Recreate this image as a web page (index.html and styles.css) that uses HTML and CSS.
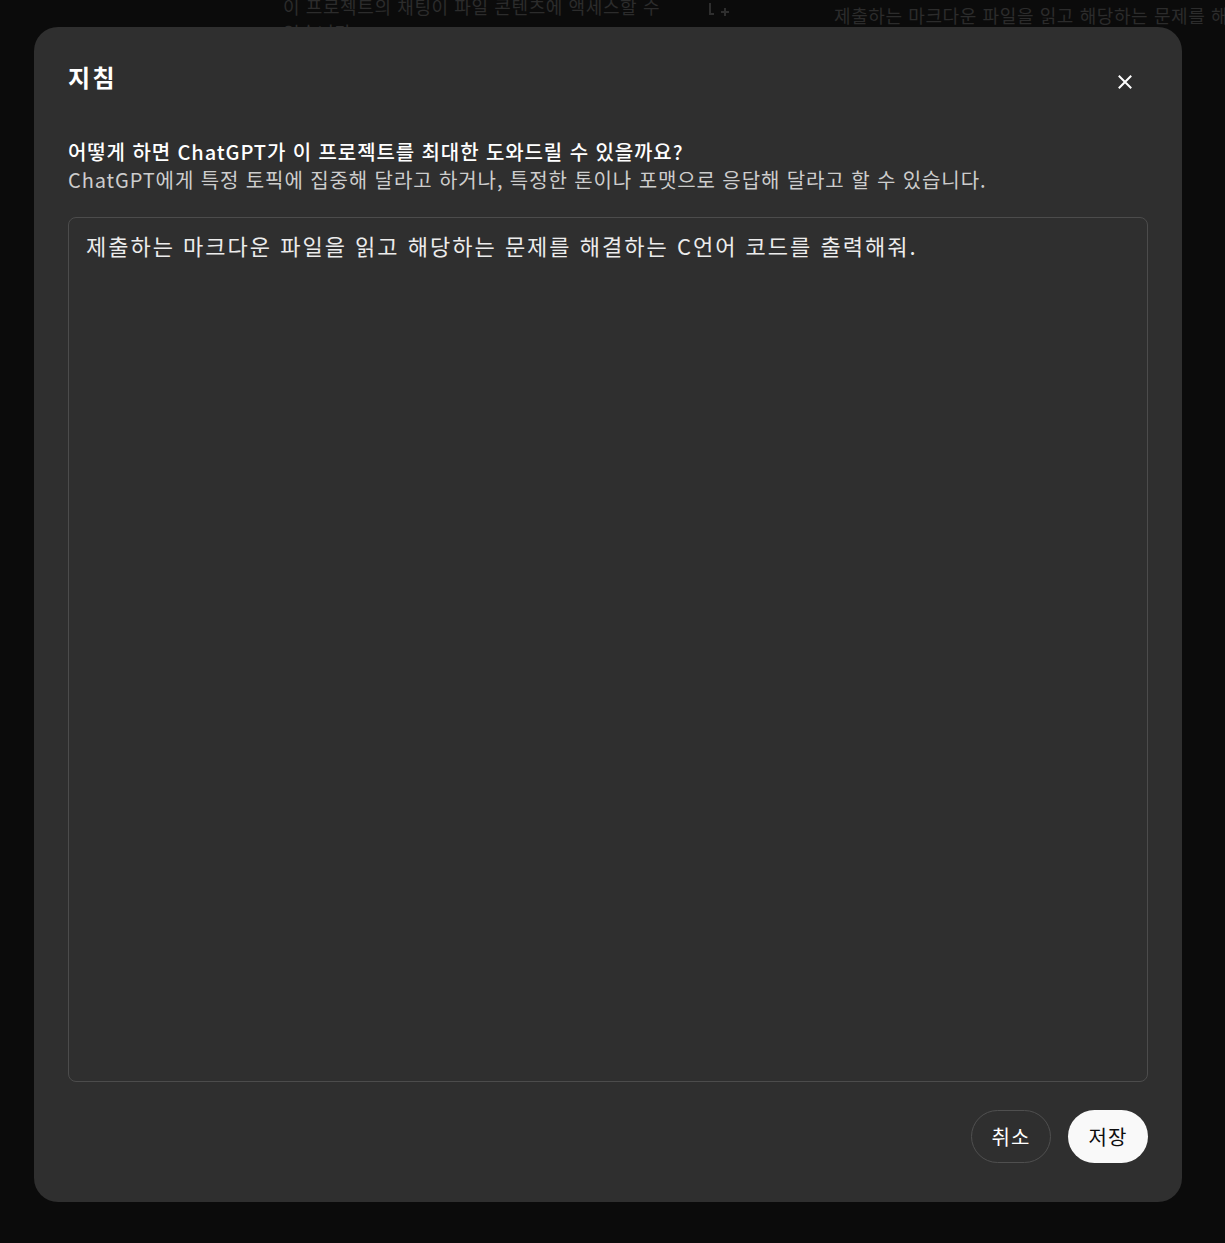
FILE: index.html
```html
<!DOCTYPE html>
<html lang="ko">
<head>
    <meta charset="utf-8">
    <title>지침</title>
    <link rel="stylesheet" href="styles.css">
</head>
<body>
    <div id="backdrop-page">
        <div class="bg-col bg-col-left">
            <p>이 프로젝트의 채팅이 파일 콘텐츠에 액세스할 수 있습니다.</p>
        </div>
        <div class="bg-col bg-col-icon">
            <svg width="26" height="16" viewBox="0 0 26 16" fill="none" stroke="#2e2e2e" stroke-width="2">
                <path d="M6 -2H2v13h4"/>
                <path d="M17 5v8M13 9h8"/>
            </svg>
        </div>
        <div class="bg-col bg-col-right">
            <p>제출하는 마크다운 파일을 읽고 해당하는 문제를 해결하는 C언어 코드를 출력해줘.</p>
        </div>
    </div>

    <div id="overlay">
        <div id="modal">
            <div class="modal-header">
                <h2 class="modal-title">지침</h2>
                <button class="close-btn" aria-label="닫기">
                    <svg width="16" height="16" viewBox="0 0 16 16" fill="none" stroke="#fff" stroke-width="2" stroke-linecap="square">
                        <path d="M2.5 2.5l11 11M13.5 2.5l-11 11"/>
                    </svg>
                </button>
            </div>
            <div class="modal-desc">
                <p class="desc-main">어떻게 하면 ChatGPT가 이 프로젝트를 최대한 도와드릴 수 있을까요?</p>
                <p class="desc-sub">ChatGPT에게 특정 토픽에 집중해 달라고 하거나, 특정한 톤이나 포맷으로 응답해 달라고 할 수 있습니다.</p>
            </div>
            <textarea class="instructions">제출하는 마크다운 파일을 읽고 해당하는 문제를 해결하는 C언어 코드를 출력해줘.</textarea>
            <div class="modal-footer">
                <button class="btn btn-cancel">취소</button>
                <button class="btn btn-save">저장</button>
            </div>
        </div>
    </div>
</body>
</html>
```

FILE: styles.css
```css
body {
    margin: 0;
    padding: 0;
    background-color: #0b0b0b;
    color: #ececec;
    font-family: "Noto Sans CJK KR", "Noto Sans", sans-serif;
    height: 100vh;
    overflow: hidden;
}

#backdrop-page {
    display: flex;
    padding-left: 283px;
}

.bg-col {
    flex-shrink: 0;
}

.bg-col p {
    margin: 0;
    font-size: 18px;
    line-height: 26px;
    letter-spacing: 0.6px;
    color: #2c2c2c;
}

.bg-col-left {
    width: 395px;
    margin-top: -7px;
}

.bg-col-icon {
    width: 156px;
    padding-left: 30px;
    box-sizing: border-box;
}

.bg-col-right {
    flex-shrink: 1;
    min-width: 0;
    white-space: nowrap;
    overflow: hidden;
    margin-top: 2px;
}

#overlay {
    position: fixed;
    top: 0;
    left: 0;
    right: 0;
    bottom: 0;
}

#modal {
    position: absolute;
    top: 27px;
    left: 34px;
    width: 1148px;
    height: 1175px;
    box-sizing: border-box;
    padding: 30px 34px 39px;
    background-color: #2f2f2f;
    border-radius: 24px;
    display: flex;
    flex-direction: column;
}

.modal-header {
    display: flex;
    justify-content: space-between;
    align-items: flex-start;
}

.modal-title {
    margin: 0;
    font-size: 24px;
    font-weight: 700;
    letter-spacing: 2.5px;
    line-height: 40px;
    color: #fff;
}

.close-btn {
    background: none;
    border: none;
    padding: 0;
    margin-top: 17px;
    margin-right: 15px;
    width: 16px;
    height: 16px;
    cursor: pointer;
}

.modal-desc {
    margin-top: 41px;
}

.modal-desc p {
    margin: 0;
    font-size: 20px;
    line-height: 28px;
    letter-spacing: 0.9px;
}

.desc-main {
    color: #fff;
    font-weight: 500;
}

.desc-sub {
    color: #cdcdcd;
}

.instructions {
    flex: 1;
    margin-top: 23px;
    background: transparent;
    border: 1px solid #4c4c4c;
    border-radius: 8px;
    padding: 11px 17px;
    font-family: inherit;
    font-size: 22px;
    line-height: 32px;
    letter-spacing: 2px;
    color: #ececec;
    resize: none;
    outline: none;
}

.modal-footer {
    margin-top: 28px;
    display: flex;
    justify-content: flex-end;
    gap: 17px;
}

.btn {
    width: 80px;
    height: 53px;
    border-radius: 27px;
    font-family: inherit;
    font-size: 20px;
    letter-spacing: 1px;
    cursor: pointer;
}

.btn-cancel {
    background: transparent;
    border: 1px solid #4f4f4f;
    color: #fff;
}

.btn-save {
    background: #f9f9f9;
    border: none;
    color: #0d0d0d;
}
```
